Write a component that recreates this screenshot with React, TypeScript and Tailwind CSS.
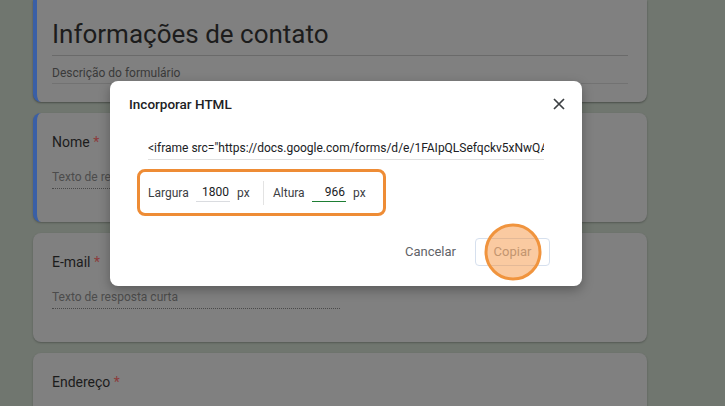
import React from "react";

type Question = { title: string; hint?: string };

const questions: Question[] = [
  { title: "Nome", hint: "Texto de resposta curta" },
  { title: "E-mail", hint: "Texto de resposta curta" },
  { title: "Endereço" },
];

const embedCode =
  '<iframe src="https://docs.google.com/forms/d/e/1FAIpQLSefqckv5xNwQAKEbV3JpTsw/viewform?embedded=true" width="1800" height="966" frameborder="0" marginheight="0" marginwidth="0">Carregando…</iframe>';

const QuestionCard: React.FC<Question & { active?: boolean }> = ({ title, hint, active }) => (
  <div
    className={`h-[109px] shrink-0 rounded-lg bg-[#808080] pr-[19px] pt-[19px] shadow-[0_1px_2px_rgba(0,0,0,0.25)] ${
      active ? "border-l-4 border-[#3a5fa6] pl-[15px]" : "pl-[19px]"
    }`}
  >
    <div className="text-[14px] leading-[20px] text-[#1c1c1c]">
      {title} <span className="text-[#8c3b3b]">*</span>
    </div>
    {hint && (
      <div className="mt-[17px] w-[288px] border-b border-dotted border-[#4a4a4a] pb-[3px] text-[12px] leading-[16px] text-[#4c4c4c]">
        {hint}
      </div>
    )}
  </div>
);

const CloseIcon = () => (
  <svg width="12" height="12" viewBox="0 0 12 12" fill="none" stroke="#3c4043" strokeWidth="1.7">
    <path d="M1 1l10 10M11 1L1 11" />
  </svg>
);

const SizeField: React.FC<{ label: string; value: string; labelWidth: string; focused?: boolean }> = ({
  label,
  value,
  labelWidth,
  focused,
}) => (
  <div className="flex items-center text-[12px] text-[#3c4043]">
    <span className={labelWidth}>{label}</span>
    <span
      className={`w-[34px] border-b pr-[1px] text-right leading-[18px] text-[#202124] ${
        focused ? "border-[#1e7e34]" : "border-[#dadce0]"
      }`}
    >
      {value}
    </span>
    <span className="ml-[7px]">px</span>
  </div>
);

const EmbedDialog = () => (
  <div className="absolute left-[110px] top-[81px] w-[472px] rounded-lg bg-white pb-[20px] shadow-[0_4px_12px_rgba(0,0,0,0.3)]">
    <div className="flex h-[46px] items-center justify-between pl-[19px] pr-[17px]">
      <span className="text-[13.5px] font-medium text-[#202124]">Incorporar HTML</span>
      <CloseIcon />
    </div>

    <input
      readOnly
      value={embedCode}
      className="mx-[38px] mt-[12px] block w-[396px] border-b border-[#e0e0e0] bg-transparent pb-[2px] text-[12px] leading-[18px] text-[#202124] outline-none"
    />

    <div className="ml-[27px] mt-[9px] flex h-[47px] w-[249px] items-center rounded-lg border-[3px] border-[#ee8c35] pl-[8px]">
      <div className="w-[115px]">
        <SizeField label="Largura" value="1800" labelWidth="w-[48px]" />
      </div>
      <div className="h-[24px] w-px bg-[#e3e3e3]" />
      <div className="pl-[9px]">
        <SizeField label="Altura" value="966" labelWidth="w-[39px]" focused />
      </div>
    </div>

    <div className="mt-[22px] flex items-center justify-end gap-[19px] pr-[32px]">
      <span className="text-[13px] text-[#5f6368]">Cancelar</span>
      <div className="relative flex h-[28px] w-[75px] items-center justify-center rounded border border-[#d6e0ee] text-[13px] text-[#9aa0a6]">
        Copiar
        <div className="absolute left-1/2 top-1/2 h-[57px] w-[57px] -translate-x-1/2 -translate-y-1/2 rounded-full border-[3px] border-[#f0943e] bg-[#f48a2e]/45" />
      </div>
    </div>
  </div>
);

export default function App() {
  return (
    <div className="relative h-[406px] w-[725px] overflow-hidden bg-[#70766f] font-['Roboto',sans-serif]">
      <div className="flex w-[647px] flex-col gap-[11px] pl-[33px]">
        <div className="h-[102px] shrink-0 rounded-b-lg border-l-4 border-[#3a5fa6] bg-[#808080] pl-[15px] pr-[19px] pt-[16px] shadow-[0_1px_2px_rgba(0,0,0,0.35)]">
          <div className="border-b border-[#6a6a6a] pb-[3px] text-[26px] leading-[36px] text-[#1c1c1c]">
            Informações de contato
          </div>
          <div className="mt-[9px] border-b border-[#727272] pb-[2px] text-[12px] leading-[16px] text-[#3a3a3a]">
            Descrição do formulário
          </div>
        </div>
        {questions.map((q, i) => (
          <QuestionCard key={q.title} {...q} active={i === 0} />
        ))}
      </div>
      <EmbedDialog />
    </div>
  );
}
